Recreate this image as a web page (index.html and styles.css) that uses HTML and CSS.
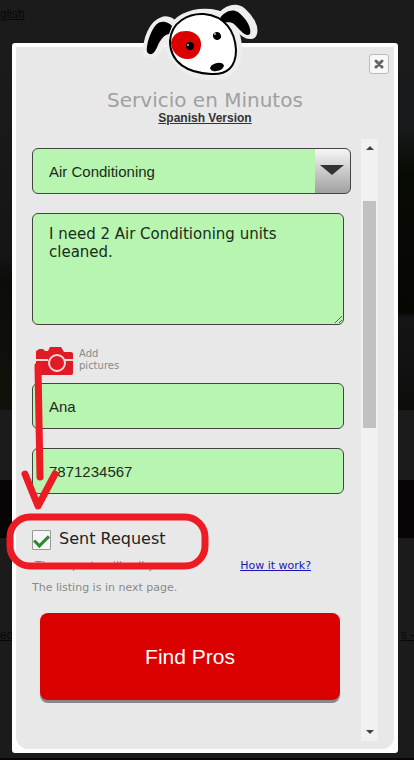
FILE: index.html
```
<!DOCTYPE html>
<html lang="es">
<head>
  <meta charset="UTF-8" />
  <meta name="viewport" content="width=device-width, initial-scale=1.0" />
  <title>Servicio en Minutos</title>
  <link rel="stylesheet" href="styles.css">
</head>
<body>
  <!-- Page behind the popup -->
  <div class="backdrop">
    <div class="topbar"><a href="#">glish</a></div>
    <div class="photo"></div>
    <div class="strip"></div>
    <div class="band"></div>
    <div class="links"><a href="#">ed</a><a href="#">s -</a></div>
    <div class="bottom"></div>
  </div>

  <div class="popup">
    <svg class="dog" viewBox="0 0 122 84" aria-hidden="true">
      <g fill="#eee" stroke="#eee" stroke-width="12" stroke-linejoin="round">
        <path d="M11 49C11 37 16 23 25 20C29 18 33 21 36 24L33 32C26 31 22 37 19 44C17 48 15 49 11 49Z"/>
        <path d="M84 15C89 9 97 5 103 10C110 16 115 25 113 30C108 31 104 24 99 20C95 16 90 17 84 15Z"/>
        <path d="M33 36C36 17 55 10 73 12C90 14 98 30 98 47C98 61 91 71 78 71C55 72 33 60 33 36Z"/>
      </g>
      <path d="M9 49C8 40 14 25 19 21C24 16 32 20 34 23L31 31C26 32 23 36 20 42C17 50 13 54 9 49Z"/>
      <path d="M82 15C86 9 94 5 100 9C108 15 114 25 112 31C108 34 104 29 99 24C94 18 91 19 84 20Z"/>
      <path fill="#fff" stroke="#000" stroke-width="2" d="M32 38C33 19 51 10 66 11C87 13 97 28 98 47C98 64 89 72 73 71C50 70 32 60 32 38Z"/>
      <path fill="#db0000" d="M33 39C35 31 41 28 48 28C58 28 64 35 63 43C62 51 56 57 49 56C41 56 33 49 33 39Z"/>
      <ellipse cx="52" cy="43" rx="4" ry="4"/>
      <ellipse cx="79" cy="33" rx="4" ry="4" transform="rotate(-20 79 33)"/>
      <ellipse cx="79" cy="64" rx="7" ry="4" transform="rotate(-15 79 64)"/>
      <circle cx="50" cy="42" r="1" fill="#bbb"/>
      <circle cx="77" cy="31" r="1" fill="#bbb"/>
    </svg>

    <button class="close" type="button" aria-label="Close">
      <svg viewBox="0 0 10 10" width="10" height="10"><path d="M2 2L8 8M8 2L2 8" stroke="#666" stroke-width="3" stroke-linecap="round"/></svg>
    </button>

    <div class="head">
      <h1>Servicio en Minutos</h1>
      <a href="#">Spanish Version</a>
    </div>

    <div class="content">
      <form>
        <div class="select">
          <select aria-label="Service">
            <option>Air Conditioning</option>
          </select>
        </div>
        <textarea aria-label="Description" spellcheck="false">I need 2 Air Conditioning units cleaned.</textarea>

        <button class="pictures" type="button">
          <svg viewBox="0 0 37 28" width="37" height="28" aria-hidden="true">
            <path fill="#e01b26" d="M0 5Q0 3 2 3L3 2H7L9 4H12L14 0H25L28 5H35Q37 5 37 7V26Q37 28 35 28H2Q0 28 0 26Z"/>
            <path stroke="#f6d9d4" stroke-width="2" d="M0 13H12M29 13H37"/>
            <circle cx="21" cy="16" r="8" fill="#e01b26" stroke="#f6d9d4" stroke-width="2"/>
          </svg>
          <span>Add<br>pictures</span>
        </button>

        <input class="field" type="text" value="Ana" aria-label="Name">
        <input class="field" type="tel" value="7871234567" aria-label="Phone">

        <div class="check">
          <input type="checkbox" id="sent" checked>
          <label for="sent">Sent Request</label>
        </div>
        <div class="hint">
          <span>The experts will call you</span>
          <a href="#">How it work?</a>
        </div>
        <p class="listing">The listing is in next page.</p>

        <button class="find" type="submit">Find Pros</button>
      </form>

      <div class="scroll" aria-hidden="true">
        <i class="up"></i>
        <div class="thumb"></div>
        <i class="down"></i>
      </div>
    </div>

    <!-- Red marker: arrow and ring around the tick box -->
    <svg class="marker" viewBox="0 0 208 216" fill="none" stroke="#ed1c24" stroke-width="7" stroke-linecap="round" stroke-linejoin="round" aria-hidden="true">
      <path d="M34 11L36 122"/>
      <path d="M21 119L34 151L51 119"/>
      <rect x="6" y="162" width="195" height="49" rx="20"/>
    </svg>
  </div>
</body>
</html>
```
FILE: styles.css
```
* {
  margin: 0;
  padding: 0;
  box-sizing: border-box;
}
body {
  min-height: 100vh;
  position: relative;
  background: #1b1b1b;
  font-family: Verdana, "DejaVu Sans", sans-serif;
  padding: 43px 16px 7px 12px;
}

/* background page */
.backdrop {
  position: absolute;
  inset: 0;
  display: flex;
  flex-direction: column;
  font: 12px/16px "Liberation Sans", sans-serif;
}
.backdrop a {
  color: #080808;
}
.topbar {
  height: 72px;
  padding-top: 6px;
}
.photo {
  height: 338px;
  background:
    linear-gradient(#17191a 60px, #080a04 100px, #060702 240px, #141414 245px, #111 300px, #0c0c0a) right / 50% 100% no-repeat,
    linear-gradient(#1a1a1a, #151515 180px, #0c0d0a 210px, #10110a);
}
.strip {
  height: 70px;
}
.band {
  height: 58px;
  background: #080506;
}
.links {
  flex: 1;
  display: flex;
  justify-content: space-between;
  padding-top: 89px;
}
.bottom {
  height: 2px;
  background: #0c0508;
}

/* popup */
.popup {
  position: relative;
  background: #e8e8e8;
  border: 4px solid #fff;
  border-radius: 3px;
}
/* rounded inner corners at the bottom */
.popup::after {
  content: "";
  position: absolute;
  inset: 0;
  border-radius: 0 0 12px 12px;
  box-shadow: 0 0 0 4px #fff;
  clip-path: inset(0);
  pointer-events: none;
}
.dog {
  position: absolute;
  top: -44px;
  left: calc(50% - 67px);
  width: 122px;
  height: 84px;
}
.close {
  position: absolute;
  top: 7px;
  right: 5px;
  width: 20px;
  height: 20px;
  display: flex;
  align-items: center;
  justify-content: center;
  background: #f8f8f8;
  border: 1px solid #bbb;
  border-radius: 3px;
}
.head {
  height: 92px;
  padding-top: 41px;
  text-align: center;
}
.head h1 {
  font-size: 20px;
  line-height: 24px;
  font-weight: normal;
  color: #a0a0a0;
}
.head a {
  display: block;
  font: bold 12px/12px "Liberation Sans", sans-serif;
  color: #333;
}
.content {
  display: flex;
  justify-content: space-between;
  padding: 0 16px 8px;
}
form {
  flex: 1;
  padding: 9px 10px 0 0;
  display: flex;
  flex-direction: column;
}
.select {
  position: relative;
  margin-bottom: 19px;
}
.select::after {
  content: "";
  position: absolute;
  top: 17px;
  right: 7px;
  border: 12px solid transparent;
  border-top: 10px solid #333;
  border-bottom: 0;
  pointer-events: none;
}
select, textarea, .field {
  display: block;
  width: 100%;
  height: 46px;
  padding: 0 16px;
  color: #1b2b1b;
  background: #b8f5b1;
  border: 1px solid #444;
  border-radius: 6px;
  font: 15px "Liberation Sans", sans-serif;
}
select {
  appearance: none;
  background: linear-gradient(#f6f6f6, #a0a0a0) right / 35px 100% no-repeat #b8f5b1;
}
textarea, .field {
  width: calc(100% - 7px);
}
textarea {
  height: 112px;
  padding: 11px 16px;
  font: 15px/18px Verdana, "DejaVu Sans", sans-serif;
}
.pictures {
  display: flex;
  gap: 6px;
  margin: 22px 0 8px 4px;
  background: none;
  border: 0;
  color: #888;
  text-align: left;
  font: 10px/12px Verdana, "DejaVu Sans", sans-serif;
}
.pictures span {
  padding-top: 1px;
}
.field + .field {
  margin-top: 19px;
}
.check {
  display: flex;
  align-items: center;
  gap: 8px;
  height: 20px;
  margin-top: 36px;
  font-size: 16px;
  line-height: 18px;
  color: #222;
}
.check label {
  padding-bottom: 2px;
}
.check input {
  appearance: none;
  width: 19px;
  height: 20px;
  border: 1px solid #999;
  border-radius: 1px;
  background: #f6f6f6;
  display: flex;
  align-items: center;
  justify-content: center;
}
.check input:checked::before {
  content: "";
  width: 12px;
  height: 6px;
  margin-bottom: 2px;
  border: solid #2b8a2b;
  border-width: 0 0 3px 3px;
  transform: rotate(-45deg);
}
.hint {
  display: flex;
  justify-content: space-between;
  margin: 9px 40px 0 0;
  padding-left: 3px;
}
.hint, .listing {
  font-size: 11px;
  line-height: 14px;
  color: #888;
}
.hint a {
  color: #1c14b8;
}
.listing {
  margin-top: 8px;
}
.find {
  height: 87px;
  margin: 18px 11px 0 8px;
  background: #db0000;
  color: #fff;
  border: 0;
  border-radius: 8px;
  box-shadow: 0 3px 0 #888;
  font: 21px "Liberation Sans", sans-serif;
}

.scroll {
  width: 17px;
  height: 602px;
  background: #f1f1f1;
  display: flex;
  flex-direction: column;
  align-items: center;
  padding: 7px 0;
}
.scroll .up {
  border: 4px solid transparent;
  border-top: 0;
  border-bottom-color: #444;
}
.scroll .down {
  border: 4px solid transparent;
  border-bottom: 0;
  border-top-color: #444;
  margin-top: auto;
}
.thumb {
  width: 13px;
  height: 227px;
  margin-top: 51px;
  background: #c1c1c1;
}

/* marker drawn over the form */
.marker {
  position: absolute;
  top: 308px;
  left: -12px;
  width: 208px;
  height: 216px;
  pointer-events: none;
}
```
